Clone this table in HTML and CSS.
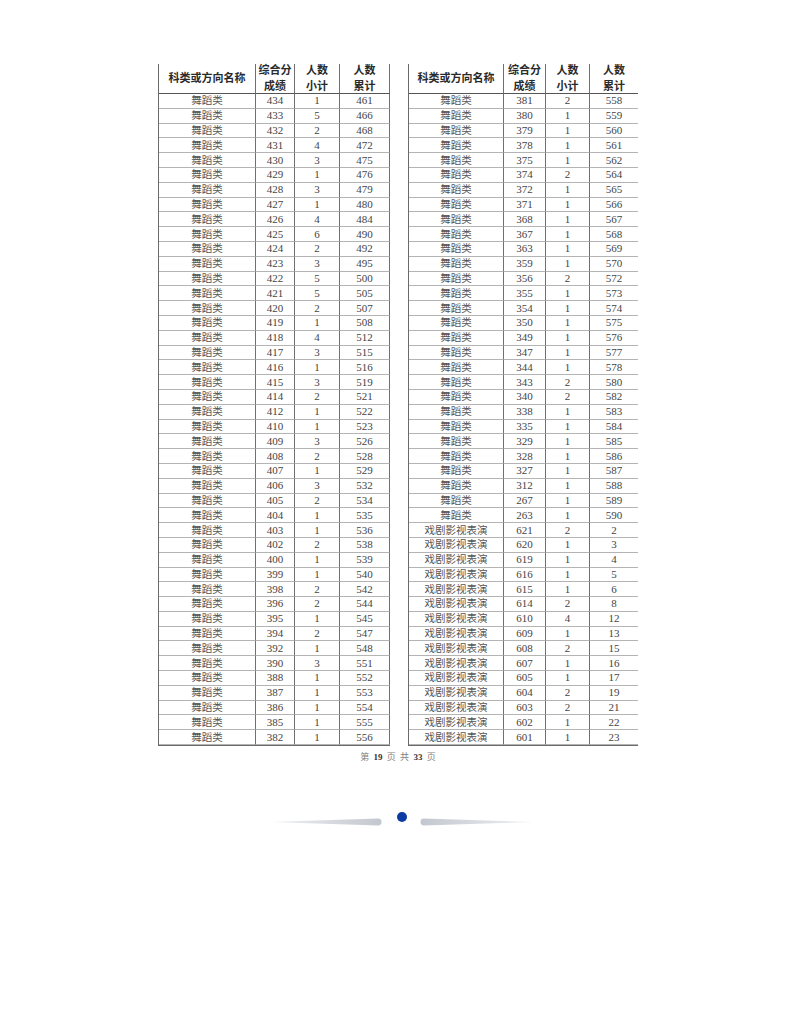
FILE: index.html
```html
<!DOCTYPE html>
<html lang="zh-CN">
<head>
<meta charset="utf-8">
<title>第19页</title>
<link rel="stylesheet" href="styles.css">
</head>
<body>
<div class="page">
  <div class="tables">
    <div class="tbl tbl-left">
      <div class="th">科类或方向名称</div><div class="th">综合分<br>成绩</div><div class="th">人数<br>小计</div><div class="th">人数<br>累计</div>
      <div class="n">舞蹈类</div><div>434</div><div>1</div><div>461</div>
      <div class="n">舞蹈类</div><div>433</div><div>5</div><div>466</div>
      <div class="n">舞蹈类</div><div>432</div><div>2</div><div>468</div>
      <div class="n">舞蹈类</div><div>431</div><div>4</div><div>472</div>
      <div class="n">舞蹈类</div><div>430</div><div>3</div><div>475</div>
      <div class="n">舞蹈类</div><div>429</div><div>1</div><div>476</div>
      <div class="n">舞蹈类</div><div>428</div><div>3</div><div>479</div>
      <div class="n">舞蹈类</div><div>427</div><div>1</div><div>480</div>
      <div class="n">舞蹈类</div><div>426</div><div>4</div><div>484</div>
      <div class="n">舞蹈类</div><div>425</div><div>6</div><div>490</div>
      <div class="n">舞蹈类</div><div>424</div><div>2</div><div>492</div>
      <div class="n">舞蹈类</div><div>423</div><div>3</div><div>495</div>
      <div class="n">舞蹈类</div><div>422</div><div>5</div><div>500</div>
      <div class="n">舞蹈类</div><div>421</div><div>5</div><div>505</div>
      <div class="n">舞蹈类</div><div>420</div><div>2</div><div>507</div>
      <div class="n">舞蹈类</div><div>419</div><div>1</div><div>508</div>
      <div class="n">舞蹈类</div><div>418</div><div>4</div><div>512</div>
      <div class="n">舞蹈类</div><div>417</div><div>3</div><div>515</div>
      <div class="n">舞蹈类</div><div>416</div><div>1</div><div>516</div>
      <div class="n">舞蹈类</div><div>415</div><div>3</div><div>519</div>
      <div class="n">舞蹈类</div><div>414</div><div>2</div><div>521</div>
      <div class="n">舞蹈类</div><div>412</div><div>1</div><div>522</div>
      <div class="n">舞蹈类</div><div>410</div><div>1</div><div>523</div>
      <div class="n">舞蹈类</div><div>409</div><div>3</div><div>526</div>
      <div class="n">舞蹈类</div><div>408</div><div>2</div><div>528</div>
      <div class="n">舞蹈类</div><div>407</div><div>1</div><div>529</div>
      <div class="n">舞蹈类</div><div>406</div><div>3</div><div>532</div>
      <div class="n">舞蹈类</div><div>405</div><div>2</div><div>534</div>
      <div class="n">舞蹈类</div><div>404</div><div>1</div><div>535</div>
      <div class="n">舞蹈类</div><div>403</div><div>1</div><div>536</div>
      <div class="n">舞蹈类</div><div>402</div><div>2</div><div>538</div>
      <div class="n">舞蹈类</div><div>400</div><div>1</div><div>539</div>
      <div class="n">舞蹈类</div><div>399</div><div>1</div><div>540</div>
      <div class="n">舞蹈类</div><div>398</div><div>2</div><div>542</div>
      <div class="n">舞蹈类</div><div>396</div><div>2</div><div>544</div>
      <div class="n">舞蹈类</div><div>395</div><div>1</div><div>545</div>
      <div class="n">舞蹈类</div><div>394</div><div>2</div><div>547</div>
      <div class="n">舞蹈类</div><div>392</div><div>1</div><div>548</div>
      <div class="n">舞蹈类</div><div>390</div><div>3</div><div>551</div>
      <div class="n">舞蹈类</div><div>388</div><div>1</div><div>552</div>
      <div class="n">舞蹈类</div><div>387</div><div>1</div><div>553</div>
      <div class="n">舞蹈类</div><div>386</div><div>1</div><div>554</div>
      <div class="n">舞蹈类</div><div>385</div><div>1</div><div>555</div>
      <div class="n">舞蹈类</div><div>382</div><div>1</div><div>556</div>
    </div>
    <div class="tbl tbl-right">
      <div class="th">科类或方向名称</div><div class="th">综合分<br>成绩</div><div class="th">人数<br>小计</div><div class="th">人数<br>累计</div>
      <div class="n">舞蹈类</div><div>381</div><div>2</div><div>558</div>
      <div class="n">舞蹈类</div><div>380</div><div>1</div><div>559</div>
      <div class="n">舞蹈类</div><div>379</div><div>1</div><div>560</div>
      <div class="n">舞蹈类</div><div>378</div><div>1</div><div>561</div>
      <div class="n">舞蹈类</div><div>375</div><div>1</div><div>562</div>
      <div class="n">舞蹈类</div><div>374</div><div>2</div><div>564</div>
      <div class="n">舞蹈类</div><div>372</div><div>1</div><div>565</div>
      <div class="n">舞蹈类</div><div>371</div><div>1</div><div>566</div>
      <div class="n">舞蹈类</div><div>368</div><div>1</div><div>567</div>
      <div class="n">舞蹈类</div><div>367</div><div>1</div><div>568</div>
      <div class="n">舞蹈类</div><div>363</div><div>1</div><div>569</div>
      <div class="n">舞蹈类</div><div>359</div><div>1</div><div>570</div>
      <div class="n">舞蹈类</div><div>356</div><div>2</div><div>572</div>
      <div class="n">舞蹈类</div><div>355</div><div>1</div><div>573</div>
      <div class="n">舞蹈类</div><div>354</div><div>1</div><div>574</div>
      <div class="n">舞蹈类</div><div>350</div><div>1</div><div>575</div>
      <div class="n">舞蹈类</div><div>349</div><div>1</div><div>576</div>
      <div class="n">舞蹈类</div><div>347</div><div>1</div><div>577</div>
      <div class="n">舞蹈类</div><div>344</div><div>1</div><div>578</div>
      <div class="n">舞蹈类</div><div>343</div><div>2</div><div>580</div>
      <div class="n">舞蹈类</div><div>340</div><div>2</div><div>582</div>
      <div class="n">舞蹈类</div><div>338</div><div>1</div><div>583</div>
      <div class="n">舞蹈类</div><div>335</div><div>1</div><div>584</div>
      <div class="n">舞蹈类</div><div>329</div><div>1</div><div>585</div>
      <div class="n">舞蹈类</div><div>328</div><div>1</div><div>586</div>
      <div class="n">舞蹈类</div><div>327</div><div>1</div><div>587</div>
      <div class="n">舞蹈类</div><div>312</div><div>1</div><div>588</div>
      <div class="n">舞蹈类</div><div>267</div><div>1</div><div>589</div>
      <div class="n">舞蹈类</div><div>263</div><div>1</div><div>590</div>
      <div class="n">戏剧影视表演</div><div>621</div><div>2</div><div>2</div>
      <div class="n">戏剧影视表演</div><div>620</div><div>1</div><div>3</div>
      <div class="n">戏剧影视表演</div><div>619</div><div>1</div><div>4</div>
      <div class="n">戏剧影视表演</div><div>616</div><div>1</div><div>5</div>
      <div class="n">戏剧影视表演</div><div>615</div><div>1</div><div>6</div>
      <div class="n">戏剧影视表演</div><div>614</div><div>2</div><div>8</div>
      <div class="n">戏剧影视表演</div><div>610</div><div>4</div><div>12</div>
      <div class="n">戏剧影视表演</div><div>609</div><div>1</div><div>13</div>
      <div class="n">戏剧影视表演</div><div>608</div><div>2</div><div>15</div>
      <div class="n">戏剧影视表演</div><div>607</div><div>1</div><div>16</div>
      <div class="n">戏剧影视表演</div><div>605</div><div>1</div><div>17</div>
      <div class="n">戏剧影视表演</div><div>604</div><div>2</div><div>19</div>
      <div class="n">戏剧影视表演</div><div>603</div><div>2</div><div>21</div>
      <div class="n">戏剧影视表演</div><div>602</div><div>1</div><div>22</div>
      <div class="n">戏剧影视表演</div><div>601</div><div>1</div><div>23</div>
    </div>
  </div>
  <p class="pager">第 <b>19</b> 页 共 <b>33</b> 页</p>
  <div class="ornament">
    <svg width="264" height="16" viewBox="0 0 264 16" aria-hidden="true">
      <defs>
        <linearGradient id="gl" x1="0" x2="1" y1="0" y2="0">
          <stop offset="0" stop-color="#eef0f3"/>
          <stop offset="1" stop-color="#c3c7cf"/>
        </linearGradient>
        <linearGradient id="gr" x1="1" x2="0" y1="0" y2="0">
          <stop offset="0" stop-color="#eef0f3"/>
          <stop offset="1" stop-color="#c3c7cf"/>
        </linearGradient>
      </defs>
      <path d="M0 11 L108 7.6 Q111.5 7.6 111.5 11 Q111.5 14.4 108 14.4 Z" fill="url(#gl)"/>
      <circle cx="132" cy="6" r="5" fill="#0e3aa3"/>
      <path d="M264 11 L154 7.6 Q150.5 7.6 150.5 11 Q150.5 14.4 154 14.4 Z" fill="url(#gr)"/>
    </svg>
  </div>
</div>
</body>
</html>
```

FILE: styles.css
```css
html, body {
  margin: 0;
  padding: 0;
  background: #ffffff;
}

body {
  font-family: "Liberation Serif", "Noto Sans CJK SC", serif;
  color: #333;
}

.page {
  padding: 64px 0 0 158px;
  width: 480px;
}

.tables {
  display: flex;
  gap: 18px;
  align-items: flex-start;
}

.tbl {
  display: grid;
  grid-template-rows: 30px;
  grid-auto-rows: 14.8px;
  border-left: 1px solid #6a6a6a;
  border-bottom: 1px solid #6a6a6a;
  font-size: 11px;
}

.tbl-left {
  grid-template-columns: 97px 39px 45px 50px;
}

.tbl-right {
  grid-template-columns: 95px 42px 44px 48px;
}

.tbl > div {
  box-sizing: border-box;
  border-right: 1px solid #707070;
  border-bottom: 1px solid #b4b4b4;
  display: flex;
  align-items: center;
  justify-content: center;
  text-align: center;
  line-height: 13px;
  color: #444;
  white-space: nowrap;
}

.tbl-right > div:nth-child(4n) {
  border-right: none;
}

.tbl > .th {
  border-bottom: 1px solid #555;
  font-weight: bold;
  color: #2a2a2a;
  font-size: 11px;
  line-height: 15.5px;
}

.tbl > .n {
  font-size: 10.5px;
  color: #555;
}

.pager {
  margin: 5px 0 0;
  text-align: center;
  font-size: 9px;
  line-height: 12px;
  color: #808080;
  word-spacing: 2px;
}

.pager b {
  color: #333;
}

.ornament {
  margin: 48px 0 0 112px;
  height: 16px;
}

.ornament svg {
  display: block;
}
```
